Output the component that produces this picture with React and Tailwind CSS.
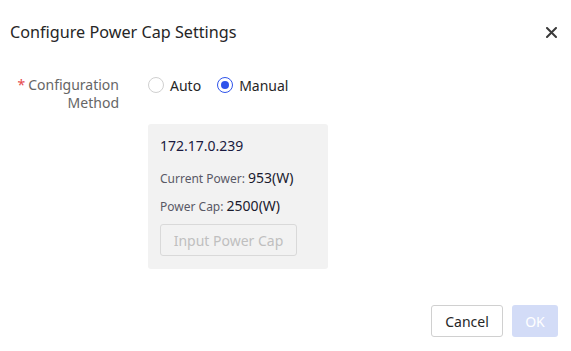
import React from 'react';

const Radio = ({ checked, label }) => (
  <label className="flex items-center gap-[6px] cursor-pointer">
    <span
      className={
        checked
          ? 'w-[16px] h-[16px] rounded-full border border-[#2f54eb] flex items-center justify-center bg-white'
          : 'w-[16px] h-[16px] rounded-full border border-[#d0d0d0] bg-white'
      }
    >
      {checked && <span className="w-[8px] h-[8px] rounded-full bg-[#2f54eb]" />}
    </span>
    <span className="text-[14px] text-[#262626]">{label}</span>
  </label>
);

export default function App() {
  return (
    <div
      className="w-[571px] h-[351px] bg-white flex flex-col"
      style={{ fontFamily: '"Noto Sans", "Open Sans", sans-serif' }}
    >
      <div className="flex items-center justify-between h-[64px] pl-[10px] pr-[12px]">
        <h1 className="text-[16.2px] text-[#262626] font-normal">Configure Power Cap Settings</h1>
        <button className="text-[#444] w-[16px] h-[16px] flex items-center justify-center">
          <svg width="11" height="11" viewBox="0 0 11 11">
            <path d="M1 1L10 10M10 1L1 10" stroke="#3a3a3a" strokeWidth="2" strokeLinecap="round" />
          </svg>
        </button>
      </div>

      <div className="flex pt-[12px]">
        <div className="w-[120px] text-right text-[14px] leading-[18px] text-[#666] pr-[1px]">
          <span className="text-[#e5484d] mr-[3px]">*</span>Configuration
          <br />
          Method
        </div>
        <div className="ml-[28px] flex flex-col">
          <div className="flex items-center gap-[16px] h-[18px]">
            <Radio label="Auto" />
            <Radio checked label="Manual" />
          </div>

          <div className="mt-[30px] w-[180px] h-[145px] bg-[#f2f2f2] rounded-[3px] px-[12px] pt-[12px]">
            <div className="text-[14px] text-[#1a1a40] leading-[20px]">172.17.0.239</div>
            <div className="mt-[11px] leading-[20px] text-[#1a1a2e]">
              <span className="text-[12px] text-[#595966]">Current Power: </span>
              <span className="text-[14px]">953(W)</span>
            </div>
            <div className="mt-[6px] leading-[20px] text-[#1a1a2e]">
              <span className="text-[12px] text-[#595966]">Power Cap: </span>
              <span className="text-[14px]">2500(W)</span>
            </div>
            <button className="mt-[7px] w-[137px] h-[32px] border border-[#d9d9d9] rounded-[3px] text-[14px] text-[#bfbfbf] bg-[#f2f2f2]">
              Input Power Cap
            </button>
          </div>
        </div>
      </div>

      <div className="flex justify-end gap-[9px] pr-[13px] mt-[36px]">
        <button className="w-[72px] h-[32px] border border-[#d0d0d0] rounded-[3px] bg-white text-[14px] text-[#262626]">
          Cancel
        </button>
        <button className="w-[46px] h-[32px] rounded-[3px] bg-[#d3dcf7] text-[14px] text-white">
          OK
        </button>
      </div>
    </div>
  );
}
